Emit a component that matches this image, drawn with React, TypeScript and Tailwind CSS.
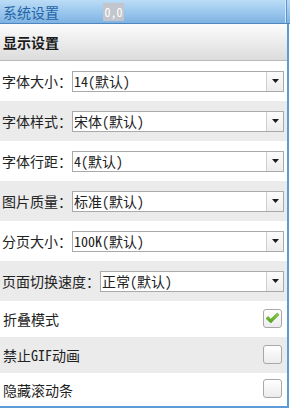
import { ReactNode } from "react";

const font = {
  fontFamily:
    '"Noto Sans Mono CJK SC", "Noto Sans CJK SC", "Noto Sans", sans-serif',
};

type SelectRowProps = {
  label: string;
  value: string;
  gray?: boolean;
};

function SelectRow({ label, value, gray }: SelectRowProps) {
  return (
    <div
      className={`flex h-[40px] items-center pl-[2px] pr-[3px] ${
        gray ? "bg-[#ebebeb]" : "bg-white"
      }`}
    >
      <span className="text-[14px] leading-none text-[#222] whitespace-nowrap">
        {label}
      </span>
      <div className="flex h-[21px] flex-1 items-stretch border border-[#a9a9a9] bg-white">
        <span className="flex flex-1 items-center pl-[1px] text-[14px] leading-none text-[#222]">
          {value}
        </span>
        <div className="flex w-[17px] items-center justify-center border-l border-[#cfcfcf] bg-gradient-to-b from-[#fbfbfb] to-[#ededed]">
          <svg width="7" height="4" viewBox="0 0 7 4">
            <path d="M0 0H7L3.5 4Z" fill="#1a1a1a" />
          </svg>
        </div>
      </div>
    </div>
  );
}

type CheckRowProps = {
  label: string;
  checked?: boolean;
  gray?: boolean;
  height: string;
};

function CheckRow({ label, checked, gray, height }: CheckRowProps) {
  return (
    <div
      className={`flex items-center justify-between pl-[3px] pr-[5px] ${height} ${
        gray ? "bg-[#ebebeb]" : "bg-white"
      }`}
    >
      <span className="text-[14px] leading-none text-[#222]">{label}</span>
      <div className="flex h-[19px] w-[19px] -translate-y-[1px] items-center justify-center rounded-[3px] border border-[#a8a8a8] bg-gradient-to-b from-white to-[#ececec]">
        {checked && (
          <svg width="15" height="12" viewBox="0 0 15 12">
            <defs>
              <linearGradient id="chk" x1="0" y1="0" x2="0" y2="1">
                <stop offset="0" stopColor="#8fd64a" />
                <stop offset="1" stopColor="#4f9e1c" />
              </linearGradient>
            </defs>
            <path
              d="M1 6.5L3.2 4.6L5.8 7.2L12.2 1L14 2.8L5.8 11Z"
              fill="url(#chk)"
              stroke="#4d9a1a"
              strokeWidth="0.6"
              strokeLinejoin="round"
            />
          </svg>
        )}
      </div>
    </div>
  );
}

function Frame({ children }: { children: ReactNode }) {
  return (
    <div className="h-[409px] w-[290px] overflow-hidden bg-white" style={font}>
      {children}
    </div>
  );
}

export default function App() {
  return (
    <Frame>
      {/* title bar */}
      <div className="flex h-[24px] items-center border-b border-[#4e87c0] bg-gradient-to-b from-[#bcdcf6] via-[#9cc8ee] to-[#7fb3e3]">
        <span className="pl-[3px] text-[14px] leading-none text-[#2464a4]">
          系统设置
        </span>
        <span className="ml-[44px] flex h-[18px] w-[21px] items-center justify-center bg-[#c2c6cc] text-[12px] leading-none text-white">
          0,0
        </span>
        <div className="ml-auto flex h-full">
          <div className="w-px bg-[#d4e8f9]" />
          <div className="w-px bg-[#5d95cc]" />
          <div className="w-[3px]" />
        </div>
      </div>

      <div className="mr-[1px] border-r-2 border-b-2 border-[#5c9bd6]">
        {/* section header */}
        <div className="flex h-[37px] items-center border-b border-[#b9b9b9] bg-gradient-to-b from-[#fcfcfc] to-[#dcdcdc] pl-[3px]">
          <span className="text-[14px] font-bold leading-none text-[#1a1a1a]">
            显示设置
          </span>
        </div>

        <SelectRow label="字体大小：" value="14(默认)" />
        <SelectRow label="字体样式：" value="宋体(默认)" gray />
        <SelectRow label="字体行距：" value="4(默认)" />
        <SelectRow label="图片质量：" value="标准(默认)" gray />
        <SelectRow label="分页大小：" value="100K(默认)" />
        <SelectRow label="页面切换速度：" value="正常(默认)" gray />

        <CheckRow label="折叠模式" checked height="h-[36px]" />
        <CheckRow label="禁止GIF动画" gray height="h-[36px]" />
        <CheckRow label="隐藏滚动条" height="h-[33px]" />
      </div>
    </Frame>
  );
}
